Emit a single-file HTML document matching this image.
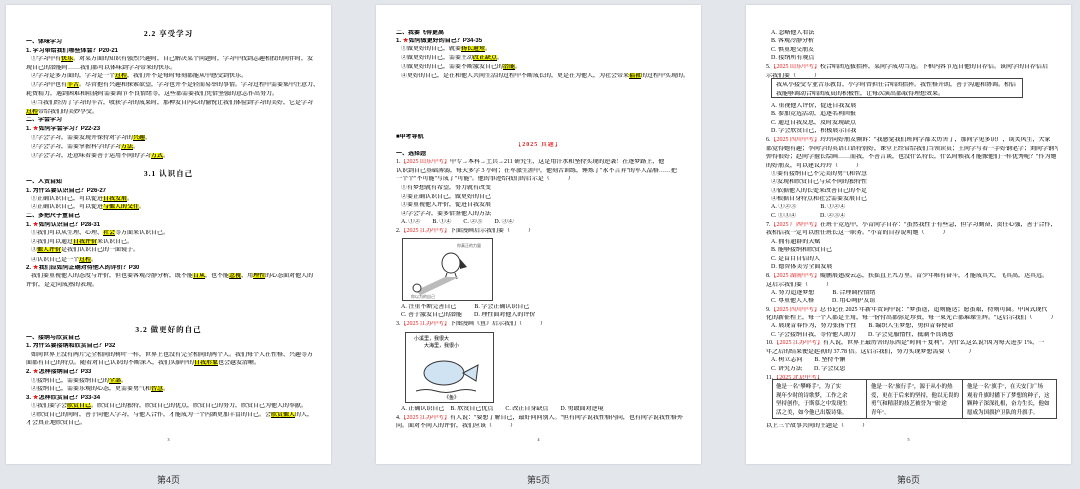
<!DOCTYPE html>
<html><head><meta charset="utf-8">
<style>
*{margin:0;padding:0;box-sizing:border-box}
body{width:1080px;height:489px;background:#e3e7ec;position:relative;overflow:hidden;font-family:"Liberation Serif","Noto Serif CJK SC","Noto Sans CJK SC",serif;color:#000}
.pg{position:absolute;top:5px;width:325px;height:459px;background:#fff;box-shadow:0 0 2px rgba(0,0,0,.15)}
.l{position:absolute;left:20px;white-space:nowrap;font-size:6px;line-height:7px;overflow:hidden;max-width:292px;font-weight:500}
.i{left:25px}
.b{font-weight:bold;font-family:"Liberation Sans","Noto Sans CJK SC",sans-serif}
.t{left:0;width:325px;max-width:325px;text-align:center;font-size:7.5px;line-height:9px;font-weight:bold;letter-spacing:1px}
.h{background:#ffff00;font-weight:bold;text-decoration:underline}
.r{color:#e21b1b}
.s{color:#e21b1b}
.pn{left:0;width:325px;max-width:325px;text-align:center;font-size:4px}
.lab{position:absolute;top:473px;width:325px;text-align:center;font-family:"Liberation Sans","Noto Sans CJK SC",sans-serif;font-size:9px;color:#333}
.box{position:absolute;border:1px solid #444}
</style></head><body>

<div class="pg" style="left:6px">
<div class="l t" style="top:24px">2.2 享受学习</div>
<div class="l b" style="top:34px">一、体味学习</div>
<div class="l b" style="top:43px">1. 学习带给我们哪些体会？P20-21</div>
<div class="l i" style="top:51px">①学习中有<span class="h">快乐</span>。对某方面的知识有强烈兴趣时，自己解决某个问题时，学习中找到志趣相投的同伴时，发</div>
<div class="l" style="top:60px">现自己的潜能时……我们都可以体味到学习带来的快乐。</div>
<div class="l i" style="top:68px">②学习是多方面的，学习是一个<span class="h">过程</span>，我们并不是每时每刻都能从中感受到快乐。</div>
<div class="l i" style="top:77px">③学习中也有<span class="h">辛苦</span>。尽管抱有兴趣和探索欲望，学习也并不是轻而易举的事情。学习过程中需要集中注意力、</div>
<div class="l" style="top:86px">耗费精力，遇到困难和阻挠时需要调节不良情绪等，这些都需要我们凭借坚强的意志作出努力。</div>
<div class="l i" style="top:95px">④当我们经历了学习的辛苦，收获学习的成果时，那种发自内心的愉悦让我们体验到学习的美好，它是学习</div>
<div class="l" style="top:104px"><span class="h">过程</span>带给我们的美妙享受。</div>
<div class="l b" style="top:112px">二、学会学习</div>
<div class="l b" style="top:121px">1. <span class="s">★</span>如何学会学习？P22-23</div>
<div class="l i" style="top:130px">①学会学习，需要发现并保持对学习的<span class="h">兴趣</span>。</div>
<div class="l i" style="top:139px">②学会学习，需要掌握科学的学习<span class="h">方法</span>。</div>
<div class="l i" style="top:148px">③学会学习，还意味着要善于运用不同的学习<span class="h">方式</span>。</div>
<div class="l t" style="top:164px">3.1 认识自己</div>
<div class="l b" style="top:174px">一、人贵自知</div>
<div class="l b" style="top:183px">1. 为什么要认识自己？P26-27</div>
<div class="l i" style="top:191px">①正确认识自己，可以促进<span class="h">自我发展</span>。</div>
<div class="l i" style="top:199px">②正确认识自己，可以促进<span class="h">与他人的交往</span>。</div>
<div class="l b" style="top:208px">二、多把尺子量自己</div>
<div class="l b" style="top:217px">1. <span class="s">★</span>如何认识自己？P28-31</div>
<div class="l i" style="top:225px">①我们可以从生理、心理、<span class="h">社会</span>等方面来认识自己。</div>
<div class="l i" style="top:234px">②我们可以通过<span class="h">自我评价</span>来认识自己。</div>
<div class="l i" style="top:242px">③<span class="h">他人评价</span>是我们认识自己的一面镜子。</div>
<div class="l i" style="top:252px">④认识自己是一个<span class="h">过程</span>。</div>
<div class="l b" style="top:260px">2. <span class="s">★</span>我们应如何正确对待他人的评价？P30</div>
<div class="l i" style="top:268px">我们要重视他人的态度与评价，但也要客观冷静分析，既不能<span class="h">盲从</span>，也不能<span class="h">忽视</span>，用<span class="h">理性</span>的心态面对他人的</div>
<div class="l" style="top:277px">评价，是走向成熟的表现。</div>
<div class="l t" style="top:320px">3.2 做更好的自己</div>
<div class="l b" style="top:330px">一、接纳与欣赏自己</div>
<div class="l b" style="top:338px">1. 为什么要接纳和欣赏自己？P32</div>
<div class="l i" style="top:347px">如同世界上没有两片完全相同的树叶一样，世界上也没有完全相同的两个人。我们每个人在性格、兴趣等方</div>
<div class="l" style="top:355px">面都有自己的特点。随着对自己认识的不断深入，我们头脑中的<span class="h">自我形象</span>也会越发清晰。</div>
<div class="l b" style="top:364px">2. <span class="s">★</span>怎样接纳自己？P33</div>
<div class="l i" style="top:373px">①接纳自己，需要接纳自己的<span class="h">全部</span>。</div>
<div class="l i" style="top:381px">②接纳自己，需要乐观的心态，更需要勇气和<span class="h">智慧</span>。</div>
<div class="l b" style="top:390px">3. <span class="s">★</span>怎样欣赏自己？P33-34</div>
<div class="l i" style="top:398px">①我们要学会<span class="h">欣赏自己</span>。欣赏自己的独特，欣赏自己的优点，欣赏自己的努力，欣赏自己为他人的奉献。</div>
<div class="l i" style="top:407px">②欣赏自己的同时，善于向他人学习，与他人合作，才能成为一个内涵更加丰富的自己。会<span class="h">欣赏他人</span>的人，</div>
<div class="l" style="top:415px">才会真正地欣赏自己。</div>
<div class="l pn" style="top:431px">3</div>
</div>
<div class="lab" style="left:6px">第4页</div>

<div class="pg" style="left:376px">
<div class="l b" style="top:25px">二、我要飞得更高</div>
<div class="l b" style="top:33px">1. <span class="s">★</span>如何做更好的自己？P34-35</div>
<div class="l i" style="top:41px">①做更好的自己，就要<span class="h">扬长避短</span>。</div>
<div class="l i" style="top:50px">②做更好的自己，需要主动<span class="h">改正缺点</span>。</div>
<div class="l i" style="top:59px">③做更好的自己，需要不断激发自己的<span class="h">潜能</span>。</div>
<div class="l i" style="top:68px">④更好的自己，是在和他人共同生活的过程中不断成长的，更是在为他人，为社会带来<span class="h">福祉</span>的过程中实现的。</div>
<div class="l b" style="top:129px">■中考导航</div>
<div class="l t r" style="top:137px;font-size:6px;line-height:7px">【2025 真题】</div>
<div class="l b" style="top:146px">一、选择题</div>
<div class="l" style="top:154px">1.<span class="r">【2025 山东中考】</span>中专→本科→土兵→211 研究生，这是用汗水和坚持实现的逆袭！在逐梦路上，他</div>
<div class="l" style="top:163px">认识到自己基础薄弱，每天多学 3 小时；在军旅生涯中，他刻苦训练，锤炼了"永不言弃"的军人品格……把</div>
<div class="l" style="top:171px">一个个"不可能"写成了"可能"。他的事迹给我们的启示是（　　　）</div>
<div class="l i" style="top:180px">①有梦想就有希望，努力就有改变</div>
<div class="l i" style="top:189px">②要正确认识自己，做更好的自己</div>
<div class="l i" style="top:197px">③要重视他人评价，促进自我发展</div>
<div class="l i" style="top:206px">④学会学习，要多借鉴他人的方法</div>
<div class="l i" style="top:214px">A. ①②　　B. ①④　　C. ②③　　D. ③④</div>
<div class="l" style="top:223px">2.<span class="r">【2025 江苏中考】</span>下面漫画启示我们要（　　　）</div>
<div class="box" style="left:26px;top:233px;width:91px;height:63px">
<svg width="89" height="61" viewBox="0 0 89 61"><text x="54" y="8" font-size="4" fill="#555" font-family="Noto Sans CJK SC">你真正的力量</text>
<ellipse cx="48" cy="24" rx="9" ry="10" fill="#fff" stroke="#333"/><path d="M57 20 L64 28 L57 30Z" fill="#333"/><path d="M44 34 L42 40 M52 34 L54 40" stroke="#333"/><polygon points="12,52 42,38 56,38 18,56" fill="#bbb"/><ellipse cx="14" cy="49" rx="4" ry="4" fill="#fff" stroke="#333"/><text x="8" y="59" font-size="4" fill="#555" font-family="Noto Sans CJK SC">你以为的自己</text></svg></div>
<div class="l i" style="top:299px">A. 注重不断完善自己　　　B. 学会正确认识自己</div>
<div class="l i" style="top:307px">C. 善于激发自己的潜能　　D. 理性面对他人的评价</div>
<div class="l" style="top:316px">3.<span class="r">【2025 江苏中考】</span>下图漫画《鱼》启示我们（　　　）</div>
<div class="box" style="left:29px;top:327px;width:89px;height:71px">
<svg width="87" height="69" viewBox="0 0 87 69"><text x="8" y="7" font-size="5" font-family="Noto Sans CJK SC">小溪里，我很大</text><text x="18" y="14" font-size="5" font-family="Noto Sans CJK SC">大海里，我很小</text>
<ellipse cx="38" cy="40" rx="20" ry="12" fill="#cfe3f3" stroke="#333"/><path d="M57 40 L72 32 L70 48Z" fill="#cfe3f3" stroke="#333"/><path d="M10 58 Q20 55 30 58 T50 58 T70 58" stroke="#333" fill="none"/><text x="38" y="66" font-size="5" font-family="Noto Sans CJK SC">《鱼》</text></svg></div>
<div class="l i" style="top:401px">A. 正确认识自己　B. 欣赏自己优点　　C. 改正自身缺点　　D. 勇敢面对逆境</div>
<div class="l" style="top:410px">4.<span class="r">【2025 江苏中考】</span>有人说："要想了解自己，最好问问别人。"但有同学说我性格内向，也有同学说我性格外</div>
<div class="l" style="top:418px">向。面对不同人的评价，我们应该（　　　）</div>
<div class="l pn" style="top:431px">4</div>
</div>
<div class="lab" style="left:376px">第5页</div>

<div class="pg" style="left:746px">
<div class="l i" style="top:25px">A. 忽略他人看法</div>
<div class="l i" style="top:33px">B. 客观冷静分析</div>
<div class="l i" style="top:42px">C. 慎重地交朋友</div>
<div class="l i" style="top:50px">D. 接纳所有观点</div>
<div class="l" style="top:59px">5.<span class="r">【2025 山东中考】</span>校合唱团选拔指挥，某同学成功当选。下框内容节选自他的自荐信。该同学的自荐信启</div>
<div class="l" style="top:68px">示我们要（　　　）</div>
<div class="box" style="left:25px;top:73px;width:252px;height:20px;border-width:1.3px"></div>
<div class="l" style="top:77px;left:30px">我从小接受专业音乐教育，小学时曾担任合唱团指挥。我性格开朗，善于沟通和协调。相信</div>
<div class="l" style="top:86px;left:30px">我能够调动合唱团成员的积极性，让每次演出都取得理想效果。</div>
<div class="l i" style="top:98px">A. 重视他人评价，促进自我发展</div>
<div class="l i" style="top:106px">B. 参加竞选活动，追逐名利回报</div>
<div class="l i" style="top:115px">C. 通过自我反思，及时发现缺点</div>
<div class="l i" style="top:123px">D. 学会欣赏自己，积极展示自我</div>
<div class="l" style="top:132px">6.<span class="r">【2025 四川中考】</span>玲玲向好朋友倾诉："我感觉我们班同学都太厉害了，那同学见多识广，谈笑风生，大家</div>
<div class="l" style="top:141px">都觉得她有趣；李同学的英语口语特别好，课堂上经常给我们当领读员；王同学写着一手好钢笔字；刘同学钢琴</div>
<div class="l" style="top:149px">弹得很好；赵同学擅长绘画……而我，不善言谈，也没什么特长，什么时候我才能像他们一样优秀呢？"作为她</div>
<div class="l" style="top:158px">的好朋友，可以建议玲玲（　　　）</div>
<div class="l i" style="top:166px">①要有接纳自己不完美的勇气和智慧</div>
<div class="l i" style="top:174px">②发现和欣赏自己与众不同的独特性</div>
<div class="l i" style="top:183px">③依据他人的长处来改善自己的不足</div>
<div class="l i" style="top:191px">④根据自身特点和社会需要发展自己</div>
<div class="l i" style="top:199px">A. ①②③　　　　B. ①②④</div>
<div class="l i" style="top:208px">C. ①③④　　　　D. ②③④</div>
<div class="l" style="top:217px">7.<span class="r">【2025 广西中考】</span>在班干竞选中，小青同学自荐："虽然我性子有些急，但学习勤奋，责任心强，善于合作，</div>
<div class="l" style="top:225px">我相信我一定可以胜任班长这一职务。"小青的自荐说明她（　　　）</div>
<div class="l i" style="top:234px">A. 拥有超群的天赋</div>
<div class="l i" style="top:242px">B. 能够接纳和欣赏自己</div>
<div class="l i" style="top:251px">C. 是盲目自信的人</div>
<div class="l i" style="top:259px">D. 德智体美劳全面发展</div>
<div class="l" style="top:268px">8.<span class="r">【2025 湖南中考】</span>鲲鹏展翅凌云志，扶摇直上九万里。青少年唯有奋斗，才能成其大，飞其高，达其远。</div>
<div class="l" style="top:277px">这启示我们要（　　　）</div>
<div class="l i" style="top:285px">A. 努力追逐梦想　　　B. 合理调控情绪</div>
<div class="l i" style="top:293px">C. 尊重他人人格　　　D. 用心呵护友谊</div>
<div class="l" style="top:302px">9.<span class="r">【2025 四川中考】</span>总书记在 2025 年新年贺词中说："梦虽遥，追则能达；愿虽艰，持则可圆。中国式现代</div>
<div class="l" style="top:310px">化的新征程上，每一个人都是主角，每一份付出都弥足珍贵，每一束光芒都璀璨生辉。"这启示我们（　　　）</div>
<div class="l i" style="top:318px">A. 展现青春作为，努力张扬个性　　B. 编织人生梦想，勇担青春使命</div>
<div class="l i" style="top:327px">C. 学会接纳自我，等待他人助力　　D. 学会克服惰性，抵制不良诱惑</div>
<div class="l" style="top:335px">10.<span class="r">【2025 江苏中考】</span>有人说，世界上最厉害的东西是"时间＋复利"。为什么这么说?因为每天进步 1%，一</div>
<div class="l" style="top:344px">年之后的结果便是起初的 37.78 倍。这启示我们，努力实现梦想需要（　　　）</div>
<div class="l i" style="top:352px">A. 树立志向　　B. 坚持不懈</div>
<div class="l i" style="top:361px">C. 讲究方法　　D. 学会反思</div>
<div class="l" style="top:370px">11.<span class="r">【2025 北京中考】</span></div>
<div class="box" style="left:26px;top:374px;width:285px;height:40px;border-width:1.3px"></div>
<div class="box" style="left:120px;top:374px;width:1px;height:40px;border:none;background:#444"></div>
<div class="box" style="left:216px;top:374px;width:1px;height:40px;border:none;background:#444"></div>
<div class="l" style="top:378px;left:30px;font-size:5.5px;line-height:8.5px">他是一名"攀峰手"，为了实<br>现年少时的诗歌梦，工作之余<br>坚持创作，于斯慕之中发现生<br>活之美，如今他已出版诗集。</div>
<div class="l" style="top:378px;left:125px;font-size:5.5px;line-height:8.5px">他是一名"旅行手"，源于从小的热<br>爱，更在于后来的坚持，他以无畏的<br>勇气和精湛的技艺被誉为"'旅'途<br>青年"。</div>
<div class="l" style="top:378px;left:221px;font-size:5.5px;line-height:8.5px">他是一名"旗手"，在天安门广场<br>观看升旗时播下了梦想的种子，这<br>颗种子深深扎根，奋力生长，他如<br>愿成为国旗护卫队的升旗手。</div>
<div class="l" style="top:418px">以上三个故事共同的主题是（　　　）</div>
<div class="l pn" style="top:431px">5</div>
</div>
<div class="lab" style="left:746px">第6页</div>
</body></html>
